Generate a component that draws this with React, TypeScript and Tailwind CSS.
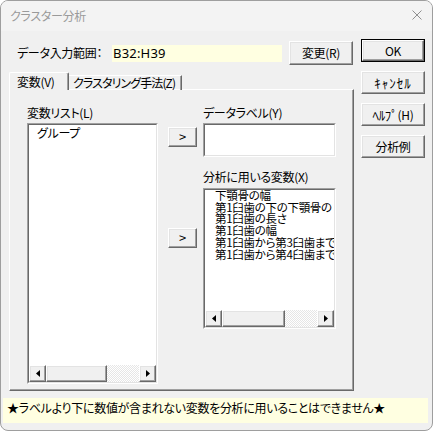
import React from "react";

const raised =
  "bg-[#f0f0f0] border border-t-white border-l-white border-r-[#696969] border-b-[#696969] shadow-[inset_-1px_-1px_0_#a0a0a0,inset_1px_1px_0_#e3e3e3]";

function Btn({ children, className = "" }: { children?: React.ReactNode; className?: string }) {
  return <div className={`${raised} flex items-center justify-center ${className}`}>{children}</div>;
}

function Sunken({ children, className = "" }: { children?: React.ReactNode; className?: string }) {
  return (
    <div className={`border border-t-[#a0a0a0] border-l-[#a0a0a0] border-r-white border-b-white ${className}`}>
      <div className="h-full border border-t-[#696969] border-l-[#696969] border-r-[#e3e3e3] border-b-[#e3e3e3] bg-white flex flex-col overflow-hidden">
        {children}
      </div>
    </div>
  );
}

function ArrowLeft() {
  return (
    <svg width="4" height="7" viewBox="0 0 4 7">
      <polygon points="4,0 4,7 0,3.5" fill="#000" />
    </svg>
  );
}
function ArrowRight() {
  return (
    <svg width="4" height="7" viewBox="0 0 4 7">
      <polygon points="0,0 0,7 4,3.5" fill="#000" />
    </svg>
  );
}

function HScroll({ thumbClass }: { thumbClass: string }) {
  return (
    <div className="h-[17px] flex shrink-0">
      <Btn className="w-[17px] h-[17px] shrink-0">
        <ArrowLeft />
      </Btn>
      <div className={`${raised} h-[17px] shrink-0 ${thumbClass}`} />
      <div className="flex-1 h-[17px] bg-[image:repeating-conic-gradient(#e6e6e6_0%_25%,#ffffff_0%_50%)] bg-[length:2px_2px]" />
      <Btn className="w-[17px] h-[17px] shrink-0">
        <ArrowRight />
      </Btn>
    </div>
  );
}

export default function App() {
  const items = [
    "下顎骨の幅",
    "第1臼歯の下の下顎骨の",
    "第1臼歯の長さ",
    "第1臼歯の幅",
    "第1臼歯から第3臼歯まで",
    "第1臼歯から第4臼歯まで",
  ];
  return (
    <div className="w-[433px] h-[431px] border border-[#9e9e9e] rounded-[8px] overflow-hidden bg-[#f0f0f0] flex flex-col font-['Noto_Sans_CJK_JP',sans-serif] text-[12px] leading-[12px] text-black [font-feature-settings:'palt'] tracking-[-0.3px]">
      {/* title bar */}
      <div className="h-[30px] shrink-0 bg-[#f3f3f3] flex items-center justify-between pl-[9px] pr-[10px]">
        <span className="text-[#9a9a9a] text-[12px]">クラスター分析</span>
        <svg width="10" height="10" viewBox="0 0 10 10" className="-mt-[2px]">
          <path d="M0.5 0.5 L9.5 9.5 M9.5 0.5 L0.5 9.5" stroke="#8f8f8f" strokeWidth="1" />
        </svg>
      </div>

      {/* top area */}
      <div className="flex pt-[8px] pl-[8px]">
        {/* left column */}
        <div className="w-[345px] pt-[2px] flex flex-col">
          <div className="h-[24px] flex items-center">
            <div className="w-[103px] pl-[8px] whitespace-nowrap">データ入力範囲：</div>
            <div className="w-[170px] h-[17px] bg-[#ffffe1] flex items-center pl-[1px] font-['Noto_Sans',sans-serif] text-[13px] tracking-[0.2px]">
              B32:H39
            </div>
            <Btn className="ml-[7px] w-[64px] h-[24px]">変更(R)</Btn>
          </div>

          {/* tabs */}
          <div className="relative z-10 -mb-px mt-[7px] h-[18px] flex items-end">
            <div className="w-[60px] h-[18px] bg-[#f0f0f0] border-t border-l border-r border-t-white border-l-white border-r-[#696969] rounded-t-[2px] shadow-[inset_-1px_0_0_#a0a0a0] flex items-center pl-[7px]">
              変数(V)
            </div>
            <div className="w-[113px] h-[15px] border-t border-r border-t-white border-r-[#696969] shadow-[inset_-1px_0_0_#a0a0a0] flex items-center pl-[4px] whitespace-nowrap overflow-hidden tracking-[-0.9px]">
              クラスタリング手法(Z)
            </div>
          </div>

          {/* panel */}
          <div className="h-[302px] border border-t-white border-l-white border-r-[#696969] border-b-[#696969] shadow-[inset_-1px_-1px_0_#a0a0a0] flex pl-[17px] pt-[17px]">
            {/* left group */}
            <div className="w-[131px] flex flex-col">
              <div className="h-[12px] mb-[4px] whitespace-nowrap">変数リスト(L)</div>
              <Sunken className="h-[261px]">
                <div className="flex-1 pl-[8px] pt-[2px]">グループ</div>
                <HScroll thumbClass="w-[61px]" />
              </Sunken>
            </div>

            {/* arrow buttons */}
            <div className="ml-[10px] w-[29px] flex flex-col pt-[20px]">
              <Btn className="h-[20px] text-[13px]">&gt;</Btn>
              <Btn className="mt-[81px] h-[20px] text-[13px]">&gt;</Btn>
            </div>

            {/* right group */}
            <div className="ml-[6px] w-[133px] flex flex-col">
              <div className="h-[12px] mb-[4px] whitespace-nowrap">データラベル(Y)</div>
              <Sunken className="h-[34px]" />
              <div className="h-[12px] mt-[14px] mb-[5px] whitespace-nowrap">分析に用いる変数(X)</div>
              <Sunken className="h-[141px]">
                <div className="flex-1 pl-[10px] text-[11.5px] leading-[11.7px] overflow-hidden">
                  {items.map((t) => (
                    <div key={t} className="whitespace-nowrap">
                      {t}
                    </div>
                  ))}
                </div>
                <HScroll thumbClass="w-[63px]" />
              </Sunken>
            </div>
          </div>
        </div>

        {/* right column */}
        <div className="ml-[7px] w-[64px] flex flex-col gap-[9px]">
          <div className="h-[23px] border border-black">
            <Btn className="h-full">OK</Btn>
          </div>
          <Btn className="h-[23px] text-[13px] tracking-[1px]">ｷｬﾝｾﾙ</Btn>
          <Btn className="h-[23px]">
            <span className="text-[13px]">ﾍﾙﾌﾟ</span>(H)
          </Btn>
          <Btn className="h-[23px]">分析例</Btn>
        </div>
      </div>

      {/* info bar */}
      <div className="ml-[2px] mt-[7px] w-[425px] h-[25px] bg-[#ffffe1] pl-[4px] pt-[4px] whitespace-nowrap">
        ★ラベルより下に数値が含まれない変数を分析に用いることはできません★
      </div>
    </div>
  );
}
